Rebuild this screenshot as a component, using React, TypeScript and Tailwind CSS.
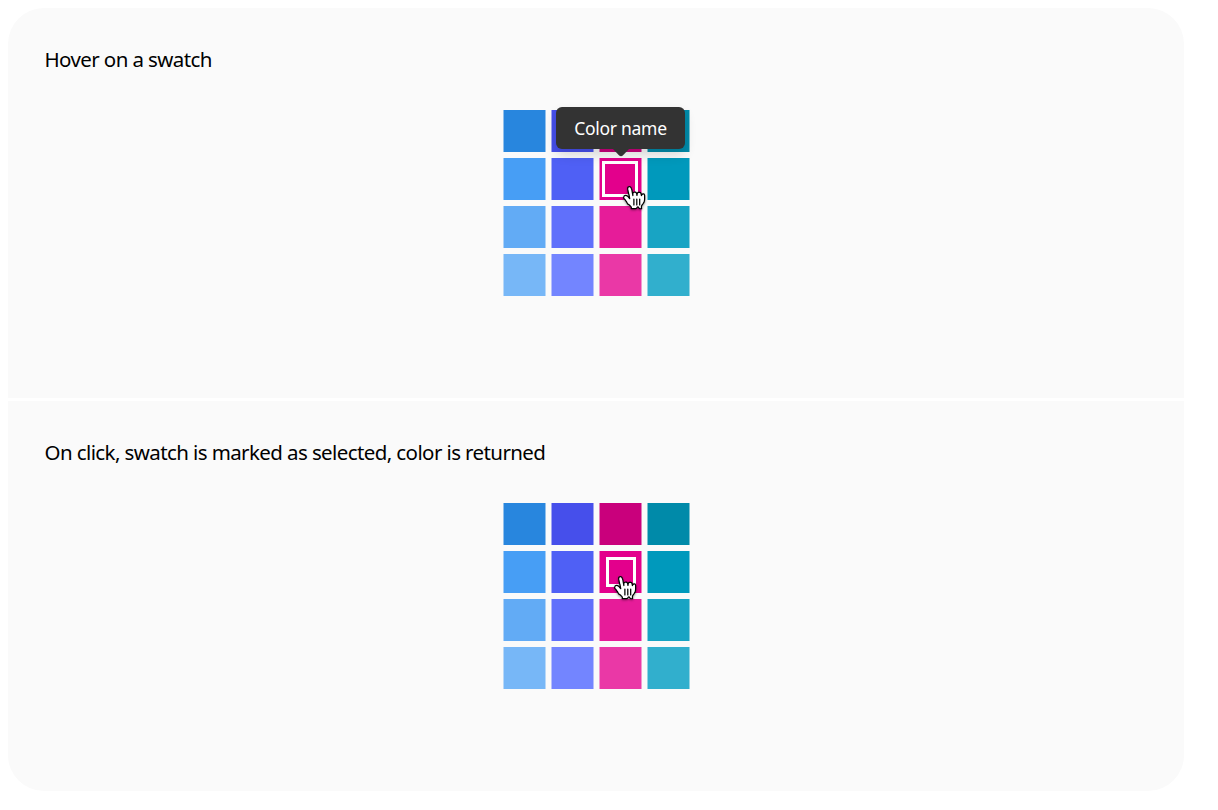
const COLORS = [
  "bg-[#2886de]", "bg-[#464feb]", "bg-[#c9007c]", "bg-[#008aa9]",
  "bg-[#479ef5]", "bg-[#4f60f5]", "bg-[#e3008c]", "bg-[#0099bc]",
  "bg-[#62abf5]", "bg-[#6070fb]", "bg-[#e61c99]", "bg-[#18a4c4]",
  "bg-[#77b7f7]", "bg-[#7385ff]", "bg-[#ea38a6]", "bg-[#31afcd]",
];

const ACTIVE_INDEX = 6;

type SwatchState = "hover" | "selected";

function HandCursor({ className }: { className: string }) {
  return (
    <svg
      className={`absolute z-20 overflow-visible drop-shadow-[0_1px_1px_rgba(0,0,0,0.4)] ${className}`}
      width="22.5"
      height="24"
      viewBox="8 8 15.5 16.5"
      fill="none"
      aria-hidden="true"
    >
      <path
        d="M11.3 20.4c-.3-.4-.6-1.1-1.2-2-.3-.5-1.2-1.5-1.5-1.9-.2-.4-.2-.6-.1-1 .1-.6.7-1.1 1.4-1.1.5 0 1 .4 1.4.7.2.2.5.6.7.8.2.2.2.3.4.5.2.3.3.5.2.1-.1-.5-.2-1.3-.4-2.1-.1-.6-.2-.7-.3-1.1-.1-.5-.2-.8-.3-1.3-.1-.3-.2-1.1-.3-1.5-.1-.5-.1-1.4.3-1.8.3-.3.9-.4 1.3-.2.5.3.8 1 .9 1.3.2.5.4 1.2.5 2 .2 1 .5 2.5.5 2.8 0-.4-.1-1.1 0-1.5.1-.3.3-.7.7-.8.3-.1.6-.1.9-.1.3.1.6.3.8.5.4.6.4 1.9.4 1.8.1-.4.1-1.2.3-1.6.1-.2.5-.4.7-.5.3-.1.7-.1 1 0 .2 0 .6.3.7.5.2.3.3 1.3.4 1.7 0 .1.1-.4.3-.7.4-.6 1.8-.8 1.9.6v2.3c0 .4-.1 1.3-.2 1.7-.1.3-.4 1-.7 1.4 0 0-1.1 1.2-1.2 1.8-.1.6-.1.6-.1 1 0 .4.1.9.1.9s-.8.1-1.2 0c-.4-.1-.9-.8-1-1.1-.2-.3-.5-.3-.7 0-.2.4-.7 1.1-1.1 1.1-.7.1-2.1 0-3.1 0 0 0 .2-1-.2-1.4-.3-.3-.8-.8-1.1-1.1z"
        fill="white"
        stroke="black"
        strokeWidth=".85"
        strokeLinejoin="round"
      />
      <path d="M15.5 17v4M17.5 17v4M19.5 17v4" stroke="black" strokeWidth=".85" strokeLinecap="round" />
    </svg>
  );
}

function Tooltip() {
  return (
    <div className="absolute bottom-[51px] left-[-44px] z-10 flex h-[42px] w-[129px] items-center justify-center rounded-[6px] bg-[#333] text-[17.5px] whitespace-nowrap text-white shadow-[0_6px_12px_rgba(0,0,0,0.14)]">
      <span className="tracking-[-0.28px]">Color name</span>
      <svg className="absolute top-[41px] left-[55.5px]" width="18" height="9" viewBox="0 0 18 9" aria-hidden="true">
        <path d="M0 0H18L10.8 7.6Q9 9 7.2 7.6Z" fill="#333" />
      </svg>
    </div>
  );
}

function SwatchGrid({ state }: { state: SwatchState }) {
  return (
    <div className="ml-[495px] grid w-[187px] grid-cols-4 gap-x-[5px] gap-y-[6px]">
      {COLORS.map((color, i) => (
        <div key={i} className={`relative h-[42px] w-[43px] border-x border-[#fafafa]/50 ${color}`}>
          {i === ACTIVE_INDEX && state === "hover" && (
            <div className="h-full w-full py-[3px] pr-[3px] pl-[2px]">
              <div className="h-full w-full border-[3px] border-white" />
              <Tooltip />
              <HandCursor className="top-[28px] left-[23px]" />
            </div>
          )}
          {i === ACTIVE_INDEX && state === "selected" && (
            <div className="h-full w-full py-[6px] pr-[5px] pl-[6px]">
              <div className="h-full w-full border-[3px] border-white" />
              <HandCursor className="top-[25px] left-[14px]" />
            </div>
          )}
        </div>
      ))}
    </div>
  );
}

function Panel({ title, state, className }: { title: string; state: SwatchState; className: string }) {
  return (
    <section className={`h-[390px] w-[1176px] bg-[#fafafa] pt-9 ${className}`}>
      <h2 className="mb-[36px] pl-[36.5px] text-[20.5px] leading-[30px] font-normal tracking-[-0.6px] text-black">
        {title}
      </h2>
      <SwatchGrid state={state} />
    </section>
  );
}

export default function App() {
  return (
    <main className="flex h-[810px] w-full flex-col gap-[3px] bg-white pt-2 pl-2 font-['Noto_Sans','Open_Sans',sans-serif]">
      <Panel title="Hover on a swatch" state="hover" className="rounded-t-[36px]" />
      <Panel title="On click, swatch is marked as selected, color is returned" state="selected" className="rounded-b-[36px]" />
    </main>
  );
}
